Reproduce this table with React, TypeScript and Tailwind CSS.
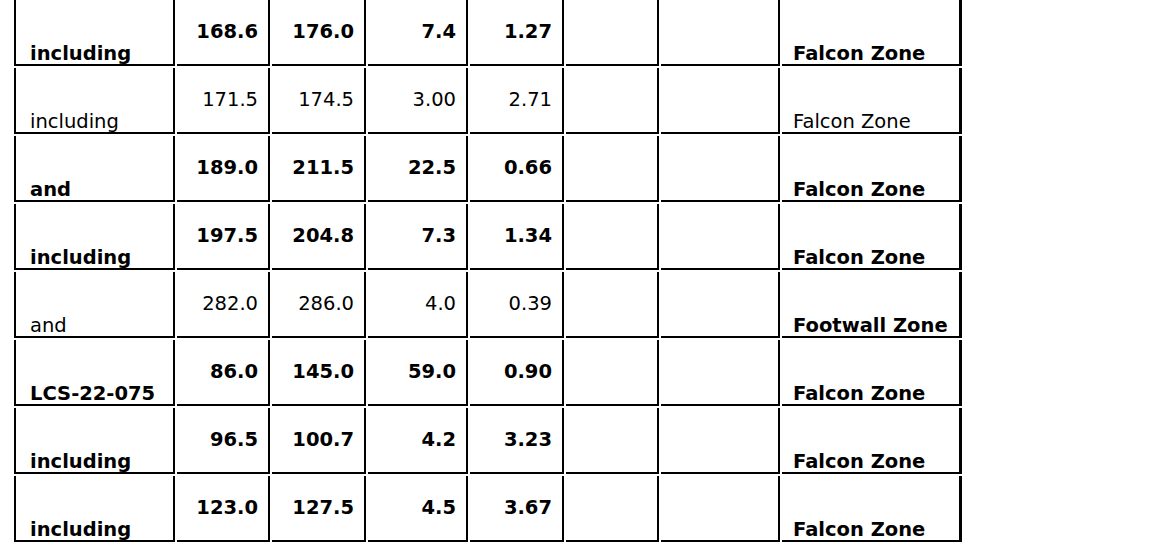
import React from "react";

type Row = {
  label: string;
  from: string;
  to: string;
  width: string;
  grade: string;
  zone: string;
  bold: boolean;
  zoneBold: boolean;
};

const rows: Row[] = [
  { label: "including", from: "168.6", to: "176.0", width: "7.4", grade: "1.27", zone: "Falcon Zone", bold: true, zoneBold: true },
  { label: "including", from: "171.5", to: "174.5", width: "3.00", grade: "2.71", zone: "Falcon Zone", bold: false, zoneBold: false },
  { label: "and", from: "189.0", to: "211.5", width: "22.5", grade: "0.66", zone: "Falcon Zone", bold: true, zoneBold: true },
  { label: "including", from: "197.5", to: "204.8", width: "7.3", grade: "1.34", zone: "Falcon Zone", bold: true, zoneBold: true },
  { label: "and", from: "282.0", to: "286.0", width: "4.0", grade: "0.39", zone: "Footwall Zone", bold: false, zoneBold: true },
  { label: "LCS-22-075", from: "86.0", to: "145.0", width: "59.0", grade: "0.90", zone: "Falcon Zone", bold: true, zoneBold: true },
  { label: "including", from: "96.5", to: "100.7", width: "4.2", grade: "3.23", zone: "Falcon Zone", bold: true, zoneBold: true },
  { label: "including", from: "123.0", to: "127.5", width: "4.5", grade: "3.67", zone: "Falcon Zone", bold: true, zoneBold: true },
];

const cell = "h-[66px] border-r-2 border-b-2 border-solid border-black p-0";
const num = cell + " pr-[10px] text-right align-middle";

function App() {
  return (
    <div className="h-[546px] w-[1149px] overflow-hidden bg-white font-['DejaVu_Sans',Verdana,sans-serif] text-[19.5px] text-black">
      <table className="-mt-[2px] ml-[12px] table-fixed border-separate border-spacing-[2px]">
        <tbody>
          {rows.map((r, i) => (
            <tr key={i} className={r.bold ? "font-bold" : "font-normal"}>
              <td className={cell + " w-[161px] border-l-2 pl-[14px] align-bottom leading-[21px]"}>
                {r.label}
              </td>
              <td className={num + " w-[93px]"}>{r.from}</td>
              <td className={num + " w-[94px]"}>{r.to}</td>
              <td className={num + " w-[100px]"}>{r.width}</td>
              <td className={num + " w-[94px]"}>{r.grade}</td>
              <td className={cell + " w-[93px]"}></td>
              <td className={cell + " w-[119px]"}></td>
              <td
                className={
                  cell +
                  " w-[180px] border-r-[3px] pl-[11px] align-bottom leading-[21px] " +
                  (r.zoneBold ? "font-bold" : "font-normal")
                }
              >
                {r.zone}
              </td>
            </tr>
          ))}
        </tbody>
      </table>
    </div>
  );
}

export default App;
